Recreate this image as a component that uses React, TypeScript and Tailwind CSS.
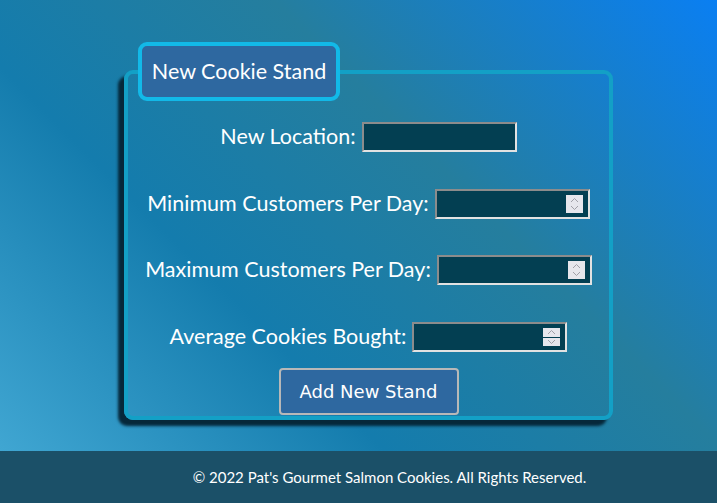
import React from "react";

const labelFont = { fontFamily: "Lato, 'Open Sans', sans-serif" };

function Spinner({ split }: { split?: boolean }) {
  if (split) {
    return (
      <div className="flex flex-col w-[17px] h-[18px] gap-[1px] mr-[5px]">
        <div className="flex-1 bg-[#e6e6ec] flex items-center justify-center">
          <svg width="9" height="6" viewBox="0 0 9 6"><path d="M1 5 L4.5 1.5 L8 5" fill="none" stroke="#a0a0a8" strokeWidth="1" /></svg>
        </div>
        <div className="flex-1 bg-[#e6e6ec] flex items-center justify-center">
          <svg width="9" height="6" viewBox="0 0 9 6"><path d="M1 1 L4.5 4.5 L8 1" fill="none" stroke="#a0a0a8" strokeWidth="1" /></svg>
        </div>
      </div>
    );
  }
  return (
    <div className="w-[17px] h-[18px] bg-[#e6e6ec] mr-[5px] flex flex-col items-center justify-center gap-[2px]">
      <svg width="9" height="6" viewBox="0 0 9 6"><path d="M1 5 L4.5 1.5 L8 5" fill="none" stroke="#a0a0a8" strokeWidth="1" /></svg>
      <svg width="9" height="6" viewBox="0 0 9 6"><path d="M1 1 L4.5 4.5 L8 1" fill="none" stroke="#a0a0a8" strokeWidth="1" /></svg>
    </div>
  );
}

function Field({ label, number, split }: { label: string; number?: boolean; split?: boolean }) {
  return (
    <div className="flex items-center gap-[6px]">
      <span className="text-white text-[21.5px] leading-none" style={labelFont}>
        {label}
      </span>
      <div className="w-[155px] h-[30px] flex items-center bg-[#033f52] border-2 border-t-[#8c8c8c] border-l-[#8c8c8c] border-b-[#e2e2e2] border-r-[#e2e2e2]">
        <input type="text" className="flex-1 min-w-0 h-full bg-transparent outline-none text-white px-1" />
        {number && <Spinner split={split} />}
      </div>
    </div>
  );
}

export default function App() {
  return (
    <div className="w-full min-h-screen flex flex-col">
      <main className="h-[451px] bg-[linear-gradient(45deg,#40a6d2_0%,#147cad_33%,#257e9e_62%,#0a7ff2_100%)] overflow-hidden">
        <fieldset className="ml-[124px] mt-[42px] w-[489px] border-4 border-[#13a0c6] rounded-[9px] shadow-[-6px_6px_3px_#06283a] p-0 m-0">
          <legend
            className="ml-[10px] px-[12px] w-[202px] h-[59px] flex items-center justify-center border-4 border-[#12b9e8] bg-[#2e68a0] rounded-[9px] text-white text-[21.5px] whitespace-nowrap"
            style={labelFont}
          >
            New Cookie Stand
          </legend>
          <div className="flex flex-col items-center pt-[21px]">
            <Field label="New Location:" />
            <div className="h-[37px]" />
            <Field label="Minimum Customers Per Day:" number />
            <div className="h-[36px]" />
            <Field label="Maximum Customers Per Day:" number />
            <div className="h-[37px]" />
            <Field label="Average Cookies Bought:" number split />
            <button
              className="mt-[16px] mb-[1px] w-[180px] h-[47px] bg-[#2e68a0] border-2 border-[#b8b8b8] rounded-[4px] text-white text-[18px]"
              style={{ fontFamily: "'DejaVu Sans', Verdana, sans-serif" }}
            >
              Add New Stand
            </button>
          </div>
        </fieldset>
      </main>
      <footer className="h-[52px] bg-[#1b5068] flex items-center justify-center pl-[62px]">
        <p className="text-white text-[15px]" style={labelFont}>
          © 2022 Pat's Gourmet Salmon Cookies. All Rights Reserved.
        </p>
      </footer>
    </div>
  );
}
